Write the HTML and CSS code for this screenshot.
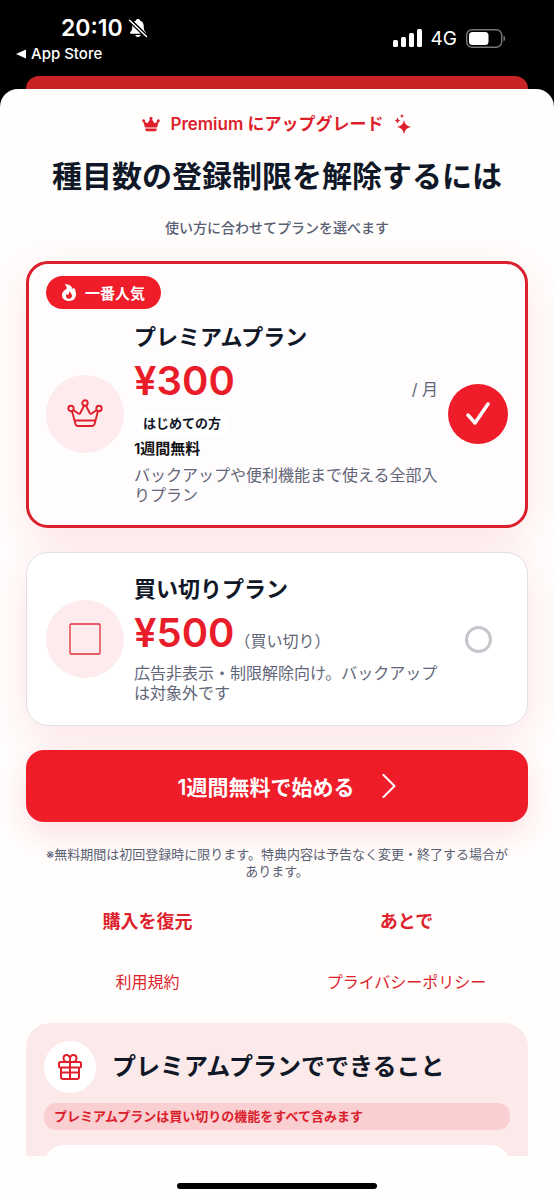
FILE: index.html
```html
<!DOCTYPE html>
<html lang="ja">
<head>
<meta charset="utf-8">
<meta name="viewport" content="width=device-width, initial-scale=1">
<title>Premium にアップグレード</title>
<link rel="stylesheet" href="styles.css">
</head>
<body>
<div class="screen">
  <header class="status">
    <div class="status-left">
      <div class="time">20:10
        <svg width="20" height="20" viewBox="0 0 20 20" aria-hidden="true"><path fill="#fff" d="M10 1c1.200 0 2 .7 2.200 1.700 2.500.8 3.500 2.900 3.500 5.300 0 3.800.7 4.800 2 6.100.6.600.4 1.600-.7 1.600H3c-1.100 0-1.300-1-.7-1.600 1.300-1.300 2-2.300 2-6.100 0-2.400 1-4.500 3.500-5.300C8 1.700 8.800 1 10 1zM7.300 17h5.400c-.3 1.300-1.300 2-2.700 2s-2.400-.7-2.700-2z"/><path d="M2 2.500 18 18" stroke="#000" stroke-width="4"/><path d="M1.500 2.200 18.500 18.500" stroke="#fff" stroke-width="1.500" stroke-linecap="round"/></svg>
      </div>
      <a class="back" href="#"><svg width="10" height="10" viewBox="0 0 10 10" aria-hidden="true"><path fill="#fff" d="M0 5 10 .5v9z"/></svg>App Store</a>
    </div>
    <div class="status-right">
      <svg width="29" height="18" viewBox="0 0 29 18" fill="#fff" aria-hidden="true"><rect x="0" y="11" width="5" height="7" rx="1.500"/><rect x="8" y="8" width="5" height="10" rx="1.500"/><rect x="16" y="4" width="5" height="14" rx="1.500"/><rect x="24" y="0" width="5" height="18" rx="1.500"/></svg>
      <span class="network">4G</span>
      <svg width="40" height="19" viewBox="0 0 40 19" aria-hidden="true"><rect x=".7" y=".7" width="35" height="17.600" rx="5.500" fill="none" stroke="#777" stroke-width="1.400"/><rect x="3" y="3" width="19.500" height="13" rx="3.500" fill="#fff"/><path fill="#777" d="M37.500 6.500c2.200 1 2.200 5 0 6z"/></svg>
    </div>
  </header>
  <div class="behind"></div>
  <main class="sheet">
    <div class="content">
      <p class="eyebrow">
        <svg width="18" height="16" viewBox="0 0 18 16" fill="#dd1f2b" aria-hidden="true"><path d="M3 11.500 1.500 6.200A1.400 1.400 0 1 1 2.700 5.700L5.500 7.200 8 3.500A1.500 1.500 0 1 1 10 3.500L12.500 7.200 15.300 5.700A1.400 1.400 0 1 1 16.500 6.200L15 11.500zM3.200 12.500h11.600l-.3 1.700q-.2 1-1.200 1H4.700q-1 0-1.200-1z"/></svg>
        <span>Premium にアップグレード</span>
        <svg width="18" height="20" viewBox="0 0 18 20" fill="#dd1f2b" aria-hidden="true"><path d="M10 6q.9 5.800 7 7-6.100 1.100-7 7-.9-5.900-7-7 6.100-1.200 7-7zM3.500 3.500q.4 2.500 3 3-2.600.5-3 3-.4-2.500-3-3 2.600-.5 3-3zM8 0q.3 1.700 2 2-1.700.3-2 2-.3-1.700-2-2 1.700-.3 2-2z"/></svg>
      </p>
      <h1 class="title">種目数の登録制限を解除するには</h1>
      <p class="subtitle">使い方に合わせてプランを選べます</p>

      <div class="plans">
        <label class="plan plan-selected">
          <span class="badge"><svg width="14" height="18" viewBox="0 0 14 18" aria-hidden="true"><path fill="#fff" d="M2.500 0C7.500.2 10 2.300 10.300 5c.7-.3 1.200-.8 1.400-1.500C13.300 5.200 14 7.800 14 10.300c0 4.200-2.800 6.700-7 6.700S0 14.500 0 11c0-2.700 1.600-4.300 3.800-5.500C5.300 4.500 4.800 2 2.500 0z"/><path fill="#ef1d29" d="M7 7c1.500 1.300 3 2.800 3 4.800 0 1.700-1.200 2.900-3 2.900s-3-1.200-3-2.700c0-1 .4-1.700 1-2.200.2.700.5 1 1 1.200C7 10 7.300 8.500 7 7z"/></svg>一番人気</span>
          <span class="plan-row">
            <span class="plan-icon"><svg width="36" height="30" viewBox="0 0 36 30" fill="none" stroke="#df202c" stroke-width="1.900" stroke-linejoin="round" aria-hidden="true"><circle cx="18" cy="4" r="2.700"/><circle cx="4" cy="9.500" r="2.700"/><circle cx="32" cy="9.500" r="2.700"/><path d="m5 12 3.500 13.200Q9 27 11 27h14q2 0 2.500-1.800L31 12M6.300 11l5 3.500q1.300.8 2-.5L17 6.700M19 6.700l3.700 7.300q.7 1.300 2 .5l5-3.500M7.500 21.500h21"/></svg></span>
            <span class="plan-body">
              <span class="plan-name">プレミアムプラン</span>
              <span class="price-row price-spread"><span class="price">¥300</span><span class="unit">/ 月</span></span>
              <span class="intro">はじめての方</span>
              <span class="trial">1週間無料</span>
              <span class="plan-desc">バックアップや便利機能まで使える全部入りプラン</span>
            </span>
            <span class="choice">
              <input class="radio" type="radio" name="plan" value="premium" checked>
              <svg class="check" width="24" height="24" viewBox="0 0 24 24" fill="none" stroke="#fff" stroke-width="3.500" stroke-linecap="round" stroke-linejoin="round" aria-hidden="true"><path d="m2 13 7 8L22 2"/></svg>
            </span>
          </span>
        </label>

        <label class="plan">
          <span class="plan-row">
            <span class="plan-icon"><svg width="32" height="32" viewBox="0 0 32 32" aria-hidden="true"><rect x="1" y="1" width="30" height="30" rx="1" fill="none" stroke="#df303b" stroke-width="1.300"/></svg></span>
            <span class="plan-body">
              <span class="plan-name">買い切りプラン</span>
              <span class="price-row"><span class="price">¥500</span><span class="unit">（買い切り）</span></span>
              <span class="plan-desc">広告非表示・制限解除向け。バックアップは対象外です</span>
            </span>
            <span class="choice"><input class="radio" type="radio" name="plan" value="onetime"></span>
          </span>
        </label>
      </div>

      <button class="cta" type="button">1週間無料で始める<svg width="14" height="24" viewBox="0 0 14 24" fill="none" stroke="#fff" stroke-width="2" stroke-linecap="round" stroke-linejoin="round" aria-hidden="true"><path d="m1.500 1 11 11-11 11"/></svg></button>
      <p class="note">※無料期間は初回登録時に限ります。特典内容は予告なく変更・終了する場合があります。</p>

      <div class="actions">
        <button class="action" type="button">購入を復元</button>
        <button class="action" type="button">あとで</button>
        <a class="legal" href="#">利用規約</a>
        <a class="legal" href="#">プライバシーポリシー</a>
      </div>

      <section class="features">
        <div class="features-head">
          <span class="features-icon"><svg width="24" height="26" viewBox="0 0 24 26" fill="none" stroke="#e01f2c" stroke-width="2" stroke-linejoin="round" aria-hidden="true"><rect x="1" y="8" width="22" height="5.500" rx="1.500"/><path d="M3 13.500V23q0 2 2 2h14q2 0 2-2v-9.500M12 8v17M3 18.500h18M12 8V5c0-2.300-1.400-4-3.400-4S5.500 2.500 5.500 4.300 7 8 9 8M12 5c0-2.300 1.400-4 3.400-4s3.100 1.500 3.100 3.300S17 8 15 8"/></svg></span>
          <h2 class="features-title">プレミアムプランでできること</h2>
        </div>
        <p class="features-note">プレミアムプランは買い切りの機能をすべて含みます</p>
        <div class="features-list"></div>
      </section>
    </div>
  </main>
  <footer class="home"><div class="home-bar"></div></footer>
</div>
</body>
</html>
```
FILE: styles.css
```css
* { box-sizing: border-box; }
body {
  margin: 0;
  background: #000;
  color: #101828;
  font-family: Inter, "Noto Sans CJK JP", sans-serif;
}
p, h1, h2 { margin: 0; }
a { text-decoration: none; }
button { border: 0; background: none; padding: 0; font-family: inherit; cursor: pointer; }
svg { display: block; flex: none; }

.screen { height: 100vh; display: flex; flex-direction: column; }
.status {
  height: 76px;
  flex: none;
  display: flex;
  justify-content: space-between;
  padding: 14px 48px 0 16px;
  color: #fff;
}
.time {
  display: flex;
  align-items: center;
  gap: 5px;
  padding-left: 45px;
  font-size: 23px;
  font-weight: 600;
  line-height: 28px;
}
.back {
  display: flex;
  align-items: center;
  gap: 5px;
  color: #fff;
  font-size: 15px;
  font-weight: 500;
  line-height: 24px;
}
.status-right { display: flex; align-items: center; gap: 9px; height: 48px; }
.network { font-size: 19px; }
.behind {
  flex: none;
  height: 13px;
  margin: 0 26px;
  background: #c92326;
  border-radius: 13px 13px 0 0;
}
.sheet {
  flex: 1;
  min-height: 0;
  overflow: hidden;
  background: #fffefd;
  border-radius: 18px 18px 0 0;
}
.content { padding: 23px 26px 0; }

.eyebrow {
  display: flex;
  align-items: center;
  justify-content: center;
  gap: 10px;
  color: #dd1f2b;
  font-size: 17px;
  font-weight: 600;
  line-height: 24px;
}
.title {
  margin-top: 20px;
  text-align: center;
  font-size: 30px;
  font-weight: 600;
  line-height: 40px;
}
.subtitle {
  margin-top: 22px;
  text-align: center;
  color: #596073;
  font-size: 14px;
  font-weight: 500;
  line-height: 20px;
}

.plans { display: grid; gap: 24px; margin-top: 23px; }
.plan {
  display: block;
  padding: 22px 19px;
  border: 1px solid #e3dfe6;
  border-radius: 22px;
  background: #fff;
  box-shadow: 0 12px 44px rgba(239, 29, 41, 0.12);
  cursor: pointer;
}
.plan-selected {
  padding: 12px 17px 20px;
  border: 3px solid #d9202c;
  background: #fffcfd;
}
.badge {
  display: inline-flex;
  align-items: center;
  gap: 9px;
  height: 33px;
  margin-bottom: 14px;
  padding: 0 16px;
  border-radius: 17px;
  background: #ef1d29;
  color: #fff;
  font-size: 15px;
  font-weight: 600;
  vertical-align: top;
}
.plan-row { display: flex; align-items: center; gap: 10px; }
.plan-icon {
  display: grid;
  place-items: center;
  flex: none;
  width: 78px;
  height: 78px;
  border-radius: 50%;
  background: #fdebed;
}
.plan-body { display: block; flex: 1; min-width: 0; }
.plan-name { display: block; font-size: 22px; font-weight: 600; line-height: 28px; }
.price-row {
  display: flex;
  align-items: baseline;
  height: 46px;
  margin: 7px 0;
  line-height: 46px;
}
.price-spread { justify-content: space-between; }
.price { color: #e91d2a; font-size: 40px; font-weight: 600; }
.unit { color: #626678; font-size: 16px; }
.intro {
  display: block;
  width: fit-content;
  padding: 0 9px;
  border-radius: 12px;
  background: #fff;
  font-size: 13px;
  font-weight: 600;
  line-height: 24px;
}
.trial {
  display: block;
  margin: 4px 0 6px;
  color: #111;
  font-size: 15px;
  font-weight: 600;
  line-height: 20px;
}
.plan-desc { display: block; color: #626678; font-size: 16px; line-height: 20px; }
.choice { display: grid; place-items: center; flex: none; width: 60px; }
.radio {
  grid-area: 1 / 1;
  appearance: none;
  width: 27px;
  height: 27px;
  margin: 0;
  border: 3px solid #c5c6cb;
  border-radius: 50%;
  cursor: pointer;
}
.radio:checked { width: 60px; height: 60px; border: 0; background: #ef1d29; }
.check { grid-area: 1 / 1; z-index: 1; pointer-events: none; }

.cta {
  display: flex;
  align-items: center;
  justify-content: center;
  gap: 28px;
  width: 100%;
  height: 72px;
  margin-top: 24px;
  padding-left: 20px;
  border-radius: 18px;
  background: #ef1d29;
  box-shadow: 0 12px 32px rgba(239, 29, 41, 0.14);
  color: #fff;
  font-size: 21px;
  font-weight: 600;
}
.note {
  margin-top: 24px;
  padding: 0 16px;
  text-align: center;
  color: #596073;
  font-size: 13px;
  line-height: 17px;
}
.actions {
  display: grid;
  grid-template-columns: 1fr 1fr;
  gap: 24px 16px;
  margin-top: 24px;
  justify-items: center;
}
.action { color: #e01f2c; font-size: 18px; font-weight: 600; line-height: 36px; }
.legal { color: #e01f2c; font-size: 16px; line-height: 36px; }

.features {
  margin-top: 23px;
  padding: 18px;
  border-radius: 24px;
  background: #fceaeb;
}
.features-head { display: flex; align-items: center; gap: 16px; }
.features-icon {
  display: grid;
  place-items: center;
  flex: none;
  width: 52px;
  height: 52px;
  border-radius: 50%;
  background: #fff;
}
.features-title { font-size: 24px; font-weight: 600; line-height: 32px; }
.features-note {
  margin-top: 10px;
  padding: 0 10px;
  border-radius: 12px;
  background: #f9cfd1;
  color: #d9202c;
  font-size: 13px;
  font-weight: 600;
  line-height: 27px;
}
.features-list { height: 240px; margin-top: 15px; border-radius: 20px; background: #fff; }

.home {
  flex: none;
  height: 44px;
  padding-top: 27px;
  background: #fffefd;
}
.home-bar { width: 36%; height: 6px; margin: 0 auto; border-radius: 3px; background: #000; }
```
